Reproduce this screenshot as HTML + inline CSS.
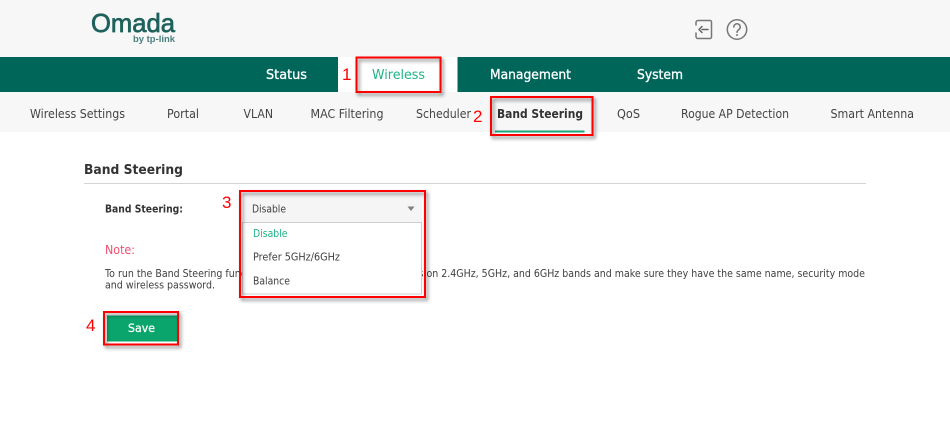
<!DOCTYPE html>
<html lang="en">
<head>
<meta charset="utf-8">
<title>Band Steering</title>
<style>
html,body{margin:0;padding:0;width:950px;height:438px;overflow:hidden;background:#fff}
svg{display:block}
text{font-family:"DejaVu Sans","Liberation Sans",sans-serif;font-size:12px;fill:#444}
.n{font-family:"Liberation Sans",sans-serif;font-size:17px;fill:#f00}
.b{font-weight:700;fill:#333}
.m{font-size:13px;fill:#fff;stroke:#fff;stroke-width:.3}
.t{font-size:10.5px;fill:#404040}
</style>
</head>
<body>
<svg width="950" height="438" viewBox="0 0 950 438" xmlns="http://www.w3.org/2000/svg">
<defs>
<filter id="s" x="-20%" y="-20%" width="150%" height="150%"><feDropShadow dx="2" dy="2.5" stdDeviation="1.8" flood-color="#000" flood-opacity=".5"/></filter>
</defs>
<rect width="950" height="57" fill="#f7f7f7"/>
<rect y="92" width="950" height="40" fill="#f7f7f7"/>
<rect y="57" width="338" height="35" fill="#00665a"/>
<rect x="457.500" y="57" width="492.500" height="35" fill="#00665a"/>

<!-- logo -->
<text x="91" y="32" textLength="84" lengthAdjust="spacingAndGlyphs" style="font-family:'Liberation Sans',sans-serif;font-size:26px;fill:#1f615c;stroke:#1f615c;stroke-width:.7">Omada</text>
<text x="133" y="42" textLength="42" lengthAdjust="spacingAndGlyphs" style="font-family:'Liberation Sans',sans-serif;font-size:9.500px;font-weight:700;fill:#4a7f7c">by tp-link</text>

<!-- header icons -->
<path d="M696 25V22.500a2 2 0 0 1 2-2h12a1.500 1.500 0 0 1 1.500 1.500v15a1.500 1.500 0 0 1-1.500 1.500H698a2 2 0 0 1-2-2V33" fill="none" stroke="#777" stroke-width="1.500" stroke-linecap="round"/>
<path d="M708 29.500H702M699 29.500h.5M702 26.500l-3 3 3 3" fill="none" stroke="#666" stroke-width="1.500" stroke-linecap="round" stroke-linejoin="round"/>
<circle cx="737" cy="29.500" r="9.700" fill="none" stroke="#777" stroke-width="1.500"/>
<path d="M733.800 27a3.200 3.200 0 1 1 4.900 2.700c-1.100.7-1.700 1.200-1.700 2.600" fill="none" stroke="#777" stroke-width="1.500" stroke-linecap="round"/>
<circle cx="737" cy="35" r="1" fill="#777"/>

<!-- main nav -->
<text class="m" x="266" y="79" textLength="41" lengthAdjust="spacingAndGlyphs">Status</text>
<text x="372" y="79" textLength="53" lengthAdjust="spacingAndGlyphs" style="font-size:13px;fill:#1eb486">Wireless</text>
<text class="m" x="490" y="79" textLength="81" lengthAdjust="spacingAndGlyphs">Management</text>
<text class="m" x="637" y="79" textLength="46" lengthAdjust="spacingAndGlyphs">System</text>

<!-- sub nav -->
<g>
<text x="30" y="118" textLength="95" lengthAdjust="spacingAndGlyphs">Wireless Settings</text>
<text x="167" y="118" textLength="32" lengthAdjust="spacingAndGlyphs">Portal</text>
<text x="243.500" y="118" textLength="29.500" lengthAdjust="spacingAndGlyphs">VLAN</text>
<text x="310.500" y="118" textLength="73" lengthAdjust="spacingAndGlyphs">MAC Filtering</text>
<text x="416" y="118" textLength="55" lengthAdjust="spacingAndGlyphs">Scheduler</text>
<text class="b" x="497" y="118" textLength="86" lengthAdjust="spacingAndGlyphs">Band Steering</text>
<text x="617" y="118" textLength="23" lengthAdjust="spacingAndGlyphs">QoS</text>
<text x="681" y="118" textLength="108" lengthAdjust="spacingAndGlyphs">Rogue AP Detection</text>
<text x="830.500" y="118" textLength="83.500" lengthAdjust="spacingAndGlyphs">Smart Antenna</text>
</g>
<rect x="495" y="130.500" width="89.500" height="2" fill="#1ba578"/>

<!-- section -->
<text class="b" x="84" y="174" textLength="99" lengthAdjust="spacingAndGlyphs" style="font-size:13.500px">Band Steering</text>
<rect x="84" y="183" width="782" height="1" fill="#d4d4d4"/>
<text class="b" x="105" y="212.500" textLength="78" lengthAdjust="spacingAndGlyphs" style="font-size:10.500px">Band Steering:</text>
<text x="105" y="254" textLength="30" lengthAdjust="spacingAndGlyphs" style="fill:#f0506e">Note:</text>
<text class="t" x="105" y="277" textLength="760" lengthAdjust="spacingAndGlyphs">To run the Band Steering function, please enable wireless networks on 2.4GHz, 5GHz, and 6GHz bands and make sure they have the same name, security mode</text>
<text class="t" x="105" y="288.500" textLength="110" lengthAdjust="spacingAndGlyphs">and wireless password.</text>

<!-- dropdown -->
<rect x="243" y="193" width="179" height="29" fill="#f5f5f5"/>
<text class="t" x="252" y="212.500" textLength="34" lengthAdjust="spacingAndGlyphs">Disable</text>
<path d="M407.500 206.500h7l-3.500 4.500z" fill="#808080"/>
<rect x="242.500" y="222.500" width="179" height="71.500" fill="#fff" stroke="#cfcfcf"/>
<text class="t" x="253" y="237" textLength="34.500" lengthAdjust="spacingAndGlyphs" style="fill:#1eb486">Disable</text>
<text class="t" x="253" y="260.500" textLength="87" lengthAdjust="spacingAndGlyphs">Prefer 5GHz/6GHz</text>
<text class="t" x="253" y="284.500" textLength="37" lengthAdjust="spacingAndGlyphs">Balance</text>

<!-- save -->
<rect x="107" y="315.500" width="70" height="26" fill="#0aa56c"/>
<text x="128" y="332" textLength="27" lengthAdjust="spacingAndGlyphs" style="font-size:11.500px;fill:#fff;stroke:#fff;stroke-width:.25">Save</text>

<!-- annotations -->
<g fill="none" stroke="#f00" stroke-width="2" filter="url(#s)">
<rect x="356.500" y="57.500" width="84" height="34.500"/>
<rect x="491" y="97" width="101.500" height="38"/>
<rect x="240" y="191" width="185" height="106"/>
<rect x="104" y="312" width="74" height="32.500"/>
</g>
<text class="n" x="342" y="80">1</text>
<text class="n" x="473" y="122">2</text>
<text class="n" x="222" y="208">3</text>
<text class="n" x="86" y="331">4</text>
</svg>
</body>
</html>
